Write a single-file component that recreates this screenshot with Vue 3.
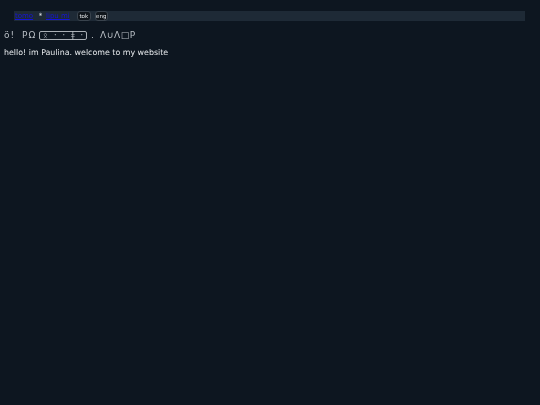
<script setup>
const links = ['tomo', 'lipu mi']
const langs = ['tok', 'eng']
</script>

<template>
  <main class="page">
    <nav class="bar">
      <a class="link first" href="#">{{ links[0] }}</a>
      <span class="star">*</span>
      <a class="link second" href="#">{{ links[1] }}</a>
      <button v-for="l in langs" :key="l" class="lang">{{ l }}</button>
    </nav>
    <div class="pona">
      <span class="w1">ö!</span>
      <span class="w2">PΩ</span>
      <span class="cartouche">
        <span>ᛟ</span><span>·</span><span>·</span><span>ǂ</span><span>·</span>
      </span>
      <span class="w3">.</span>
      <span class="w4">Λ∪Λ□P</span>
    </div>
    <p class="intro">hello! im Paulina. welcome to my website</p>
  </main>
</template>

<style>
html, body { margin: 0; background: #0d1620; }
</style>

<style scoped>
.page {
  width: 540px;
  height: 405px;
  overflow: hidden;
  background: #0d1620;
  color: #e6e9ec;
  font-family: "DejaVu Sans", sans-serif;
  font-size: 8px;
  filter: blur(0.3px);
}
.bar {
  display: flex;
  align-items: center;
  margin: 11px 15px 0 14px;
  height: 10px;
  padding-left: 1px;
  background: #1e2a36;
  font-size: 7px;
}
.link { color: #1414d8; text-decoration: underline; }
.first { width: 21px; }
.second { width: 28px; white-space: nowrap; margin-right: 3px; }
.star { width: 9px; text-align: center; color: #e6e9ec; padding-right: 1px; }
.lang {
  font: inherit;
  font-size: 5.5px;
  width: 13.5px;
  height: 10px;
  padding: 0;
  margin-right: 4px;
  border: 1px solid #39434d;
  border-radius: 3px;
  background: #10161c;
  color: #e6e9ec;
}
.pona {
  display: flex;
  align-items: center;
  margin: 8px 0 0 4px;
  height: 12px;
  font-size: 9px;
  color: #b9bfc5;
}
.w1 { width: 18px; letter-spacing: 1px; }
.w2 { width: 17px; letter-spacing: 1px; }
.cartouche {
  display: flex;
  justify-content: space-around;
  align-items: center;
  box-sizing: border-box;
  width: 48px;
  height: 9px;
  border: 1px solid #aab0b6;
  border-radius: 2px;
  font-size: 8px;
  line-height: 7px;
}
.w3 { width: 9px; padding-left: 4px; }
.w4 { letter-spacing: 0.6px; font-size: 9px; }
.intro {
  margin: 5px 0 0 4px;
  font-size: 7.9px;
  line-height: 14px;
  color: #e6e9ec;
}
</style>
